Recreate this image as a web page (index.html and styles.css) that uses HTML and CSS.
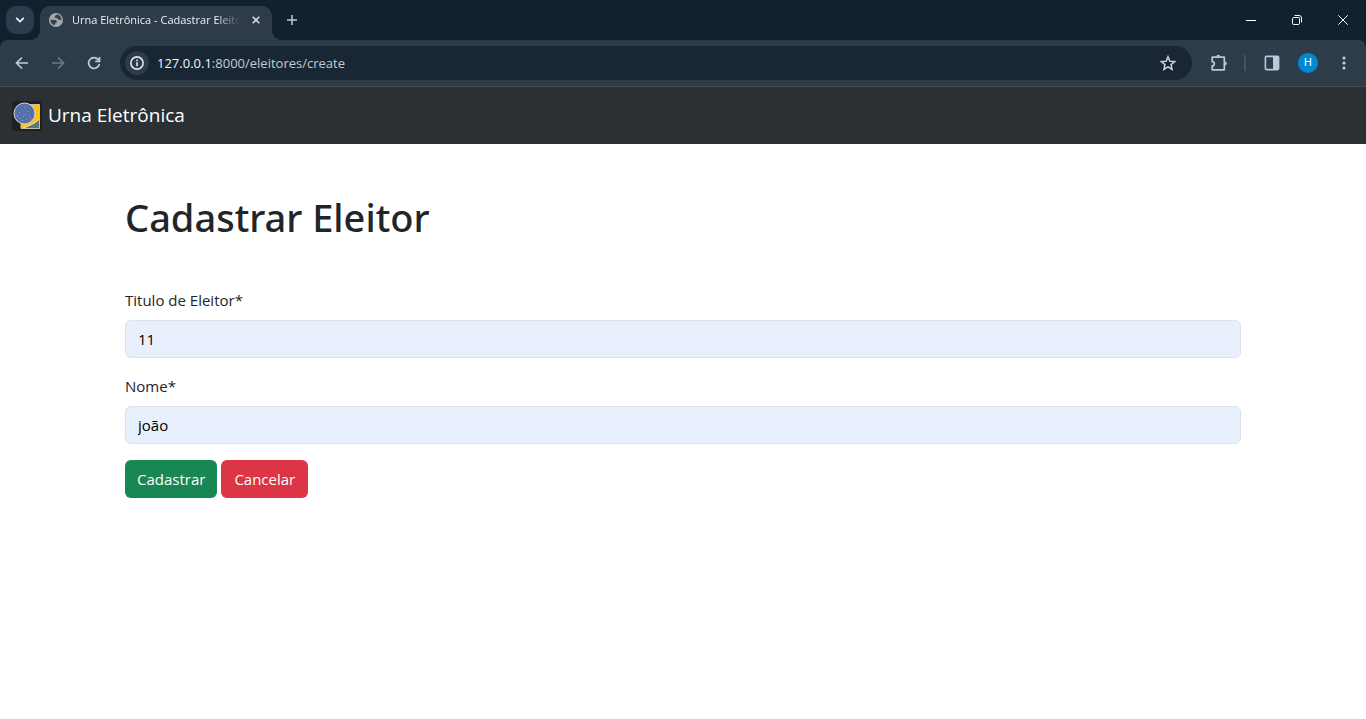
FILE: index.html
```html
<!DOCTYPE html>
<html lang="pt-BR">
<head>
<meta charset="utf-8">
<meta name="viewport" content="width=device-width, initial-scale=1">
<title>Urna Eletrônica - Cadastrar Eleitor</title>
<link rel="stylesheet" href="styles.css">
</head>
<body>
<div class="browser">
  <div class="tab-strip">
    <button class="tab-search" type="button" aria-label="Pesquisar guias">
      <svg width="10" height="6" viewBox="0 0 10 6" fill="none" stroke="#e8f0f6" stroke-width="1.8"><path d="M1.2 .8 5 4.6 8.800 .8"/></svg>
    </button>
    <div class="tab">
      <svg class="tab-globe" width="14" height="14" viewBox="0 0 14 14"><circle cx="7" cy="7" r="7" fill="#a5a8ac"/><g fill="#35414d"><path d="M8.600 1.600C7.200 2 5.700 2.600 5.700 3.900c0 1 1 1.100 2 1.100.7 0 .8 1.500 1.800 1.600 1.100.1 1.500.7 2.900.6A5.500 5.500 0 0 0 8.600 1.600Z"/><path d="M1.500 6.800h3.700c1.600 0 2.700.7 2.700 1.900 0 1.300-1.500 1-1.900 2.100-.2.600-.1 1.100-.2 1.500a5.500 5.500 0 0 1-4.300-5.500Z"/></g></svg>
      <span class="tab-title">Urna Eletrônica - Cadastrar Eleitor</span>
      <button class="tab-close" type="button" aria-label="Fechar guia">
        <svg width="8" height="8" viewBox="0 0 8 8" stroke="#e3e8ec" stroke-width="1.500"><path d="m.7.7 6.600 6.600M7.300.7.7 7.300"/></svg>
      </button>
    </div>
    <button class="new-tab" type="button" aria-label="Nova guia">
      <svg width="10" height="10" viewBox="0 0 10 10" stroke="#bdcbdc" stroke-width="1.500"><path d="M5 0v10M0 5h10"/></svg>
    </button>
    <div class="window-controls">
      <button type="button" aria-label="Minimizar"><svg width="10" height="11" viewBox="0 0 10 11" stroke="#fff"><path d="M0 5.500h10"/></svg></button>
      <button type="button" aria-label="Restaurar"><svg width="10" height="10" viewBox="0 0 10 10" fill="none" stroke="#fff"><rect x=".5" y="2.500" width="7" height="7" rx="1.200"/><path d="M2.500.5h4.500A2.500 2.500 0 0 1 9.500 3v4.500"/></svg></button>
      <button type="button" aria-label="Fechar"><svg width="10" height="10" viewBox="0 0 10 10" stroke="#fff"><path d="m.3.300 9.400 9.400M9.700.3.300 9.700"/></svg></button>
    </div>
  </div>
  <div class="toolbar">
    <button class="tool" type="button" aria-label="Voltar"><svg width="16" height="16" viewBox="0 0 16 16" fill="none" stroke="#c0ccda" stroke-width="1.700"><path d="M14 8H3M8 2.500 2.500 8 8 13.500"/></svg></button>
    <button class="tool" type="button" aria-label="Avançar"><svg width="16" height="16" viewBox="0 0 16 16" fill="none" stroke="#6f7a86" stroke-width="1.700"><path d="M2 8h11M8 2.500 13.500 8 8 13.500"/></svg></button>
    <button class="tool" type="button" aria-label="Recarregar"><svg width="16" height="16" viewBox="0 0 16 16" fill="none" stroke="#c0ccda" stroke-width="1.700"><path d="M13.300 9A5.400 5.400 0 1 1 12.200 4.600L13.200 6"/><path d="M13.500 2v4.300H9.200"/></svg></button>
    <div class="address-bar">
      <span class="site-info"><svg width="14" height="14" viewBox="0 0 14 14" fill="none" stroke="#e3e5e8" stroke-width="1.600"><circle cx="7" cy="7" r="6.100"/><path d="M7 6.300v4M7 3.600v1.600"/></svg></span>
      <span class="url"><span class="url-host">127.0.0.1</span>:8000/eleitores/create</span>
      <button class="star" type="button" aria-label="Adicionar aos favoritos"><svg width="16" height="16" viewBox="0 0 16 16" fill="none" stroke="#cdd1d6" stroke-width="1.500"><path d="m8 1.700 1.900 4.500 4.700.4-3.600 3.100 1.100 4.700L8 11.900l-4.100 2.500L5 9.700 1.400 6.600l4.700-.4z"/></svg></button>
    </div>
    <div class="actions">
      <button class="tool" type="button" aria-label="Extensões"><svg width="18" height="18" viewBox="0 0 18 18"><path d="M2.200 3.200h12.100v12.600H2.200v-3.900a2.100 2.100 0 0 0 0-4.200z" fill="none" stroke="#b9c8dc" stroke-width="1.700" stroke-linejoin="round"/><path d="M6.300 2.800a2 2 0 0 1 4 0zM14.800 7.500a2 2 0 0 1 0 4z" fill="#b9c8dc"/></svg></button>
      <span class="divider"></span>
      <button class="tool" type="button" aria-label="Painel lateral"><svg width="16" height="16" viewBox="0 0 16 16"><rect x="1.400" y="1.400" width="13.200" height="13.200" rx="1" fill="none" stroke="#b9c8dc" stroke-width="1.600"/><path d="M9 1h6v14H9z" fill="#b9c8dc"/></svg></button>
      <button class="tool" type="button" aria-label="Perfil"><span class="avatar">H</span></button>
      <button class="tool" type="button" aria-label="Menu"><svg width="4" height="14" viewBox="0 0 4 14" fill="#c0ccda"><circle cx="2" cy="2" r="1.600"/><circle cx="2" cy="7" r="1.600"/><circle cx="2" cy="12" r="1.600"/></svg></button>
    </div>
  </div>
</div>
<nav class="navbar">
  <a class="brand" href="#">
    <svg width="30" height="30" viewBox="0 0 30 30"><path d="M0 0h30v30H0z" fill="#20211c"/><path d="M9 3.500h18.500v24H9z" fill="#ffc20e"/><path d="M27.500 18v9.500H10.500C17 25 23 22.500 27.500 18Z" fill="#587779"/><path d="M10 27.500C17 25 23 22.500 27.500 18" fill="none" stroke="#eee8ce"/><path d="M18 3.500h9.500v24H9v-7" fill="none" stroke="#c2c2ae"/><circle cx="12.500" cy="12.500" r="10.500" fill="#5870a8" stroke="#d4d9e2"/><g fill="#8f9fc8"><path d="M12 6h1v1h-1zM5 14h1v1H5zM8 17h1v1H8zM11 15h1v1h-1zM10 19h1v1h-1zM14 18h1v1h-1zM17 14h1v1h-1zM18 17h1v1h-1zM15 10h1v1h-1zM13 13h1v1h-1zM7 11h1v1H7z"/></g></svg>
    <span>Urna Eletrônica</span>
  </a>
</nav>
<main class="container">
  <h1>Cadastrar Eleitor</h1>
  <form>
    <div class="field">
      <label for="titulo">Titulo de Eleitor*</label>
      <input id="titulo" type="text" value="11">
    </div>
    <div class="field">
      <label for="nome">Nome*</label>
      <input id="nome" type="text" value="joão">
    </div>
    <div class="buttons">
      <button class="btn btn-success" type="button">Cadastrar</button>
      <a class="btn btn-danger" href="#">Cancelar</a>
    </div>
  </form>
</main>
</body>
</html>
```
FILE: styles.css
```css
* { box-sizing: border-box; }
body {
  margin: 0;
  background: #fff;
  color: #212529;
  font: 15px/24px "Open Sans", "Noto Sans", sans-serif;
}
button { font: inherit; color: inherit; border: 0; padding: 0; background: none; }
svg { display: block; flex: none; }

.browser { background: #12212e; border-bottom: 1px solid #484b4f; }
.tab-strip { display: flex; align-items: center; height: 40px; padding-left: 6px; }
.tab-search {
  display: grid;
  place-items: center;
  width: 28px;
  height: 28px;
  border-radius: 10px;
  background: #2b3d4c;
}
.tab {
  position: relative;
  display: flex;
  align-items: center;
  align-self: flex-end;
  width: 232px;
  height: 34px;
  margin-left: 6px;
  padding: 0 8px 6px 9px;
  border-radius: 10px 10px 0 0;
  background: #2e3c4a;
}
.tab::before, .tab::after {
  content: "";
  position: absolute;
  bottom: 0;
  width: 10px;
  height: 10px;
}
.tab::before { right: 100%; background: radial-gradient(circle at 0 0, transparent 10px, #2e3c4a 10px); }
.tab::after { left: 100%; background: radial-gradient(circle at 100% 0, transparent 10px, #2e3c4a 10px); }
.tab-title {
  flex: 1;
  margin-left: 9px;
  overflow: hidden;
  white-space: nowrap;
  font-size: 11px;
  line-height: 18px;
  color: #eceff2;
  mask-image: linear-gradient(90deg, #000 86%, transparent);
}
.tab-close { display: grid; place-items: center; width: 16px; height: 16px; margin-left: 8px; }
.new-tab { display: grid; place-items: center; width: 28px; height: 28px; margin-left: 6px; }
.window-controls { display: flex; align-self: stretch; margin-left: auto; }
.window-controls button { display: grid; place-items: center; width: 46px; }

.toolbar {
  display: flex;
  align-items: center;
  height: 46px;
  padding: 0 4px;
  border-radius: 8px 8px 0 0;
  background: #2e3c4a;
}
.tool { display: grid; place-items: center; flex: none; width: 36px; height: 34px; }
.address-bar {
  display: flex;
  align-items: center;
  flex: 1;
  height: 34px;
  margin-left: 8px;
  padding: 0 16px 0 5px;
  border-radius: 17px;
  background: #192734;
}
.site-info { display: grid; place-items: center; width: 24px; height: 24px; border-radius: 50%; background: #2e3c4a; }
.url { flex: 1; margin-left: 8px; font-size: 13px; color: #c6cacf; }
.url-host { color: #f3f5f7; }
.actions { display: flex; align-items: center; margin-left: 9px; }
.divider { width: 2px; height: 16px; margin: 0 8px 0 7px; background: #455362; }
.avatar {
  display: grid;
  place-items: center;
  width: 20px;
  height: 20px;
  border-radius: 50%;
  background: #0288d1;
  color: #fff;
  font: 11px/20px Roboto, sans-serif;
}

.navbar { display: flex; padding: 13px 12px; background: #2b3035; }
.brand { display: flex; align-items: center; gap: 6px; color: #fff; font-size: 19px; line-height: 31px; text-decoration: none; }

.container { max-width: 1140px; margin: 0 auto; padding: 48px 12px; }
h1 { margin: 0 0 46px; font-family: "Noto Sans", "Open Sans", sans-serif; font-size: 38px; line-height: 50px; font-weight: 500; }
.field { margin-bottom: 16px; }
.field label { display: block; width: fit-content; margin-bottom: 8px; font-size: 15px; }
.field input {
  display: block;
  width: 100%;
  height: 38px;
  padding: 6px 12px;
  border: 1px solid #dee2e6;
  border-radius: 6px;
  background: #e8f0fe;
  color: #000;
  font: inherit;
}
.buttons { display: flex; gap: 4px; }
.btn { padding: 7px 12px; border-radius: 6px; color: #fff; text-decoration: none; }
.btn-success { background: #198754; }
.btn-danger { background: #dc3545; padding: 7px 13px; }
```
